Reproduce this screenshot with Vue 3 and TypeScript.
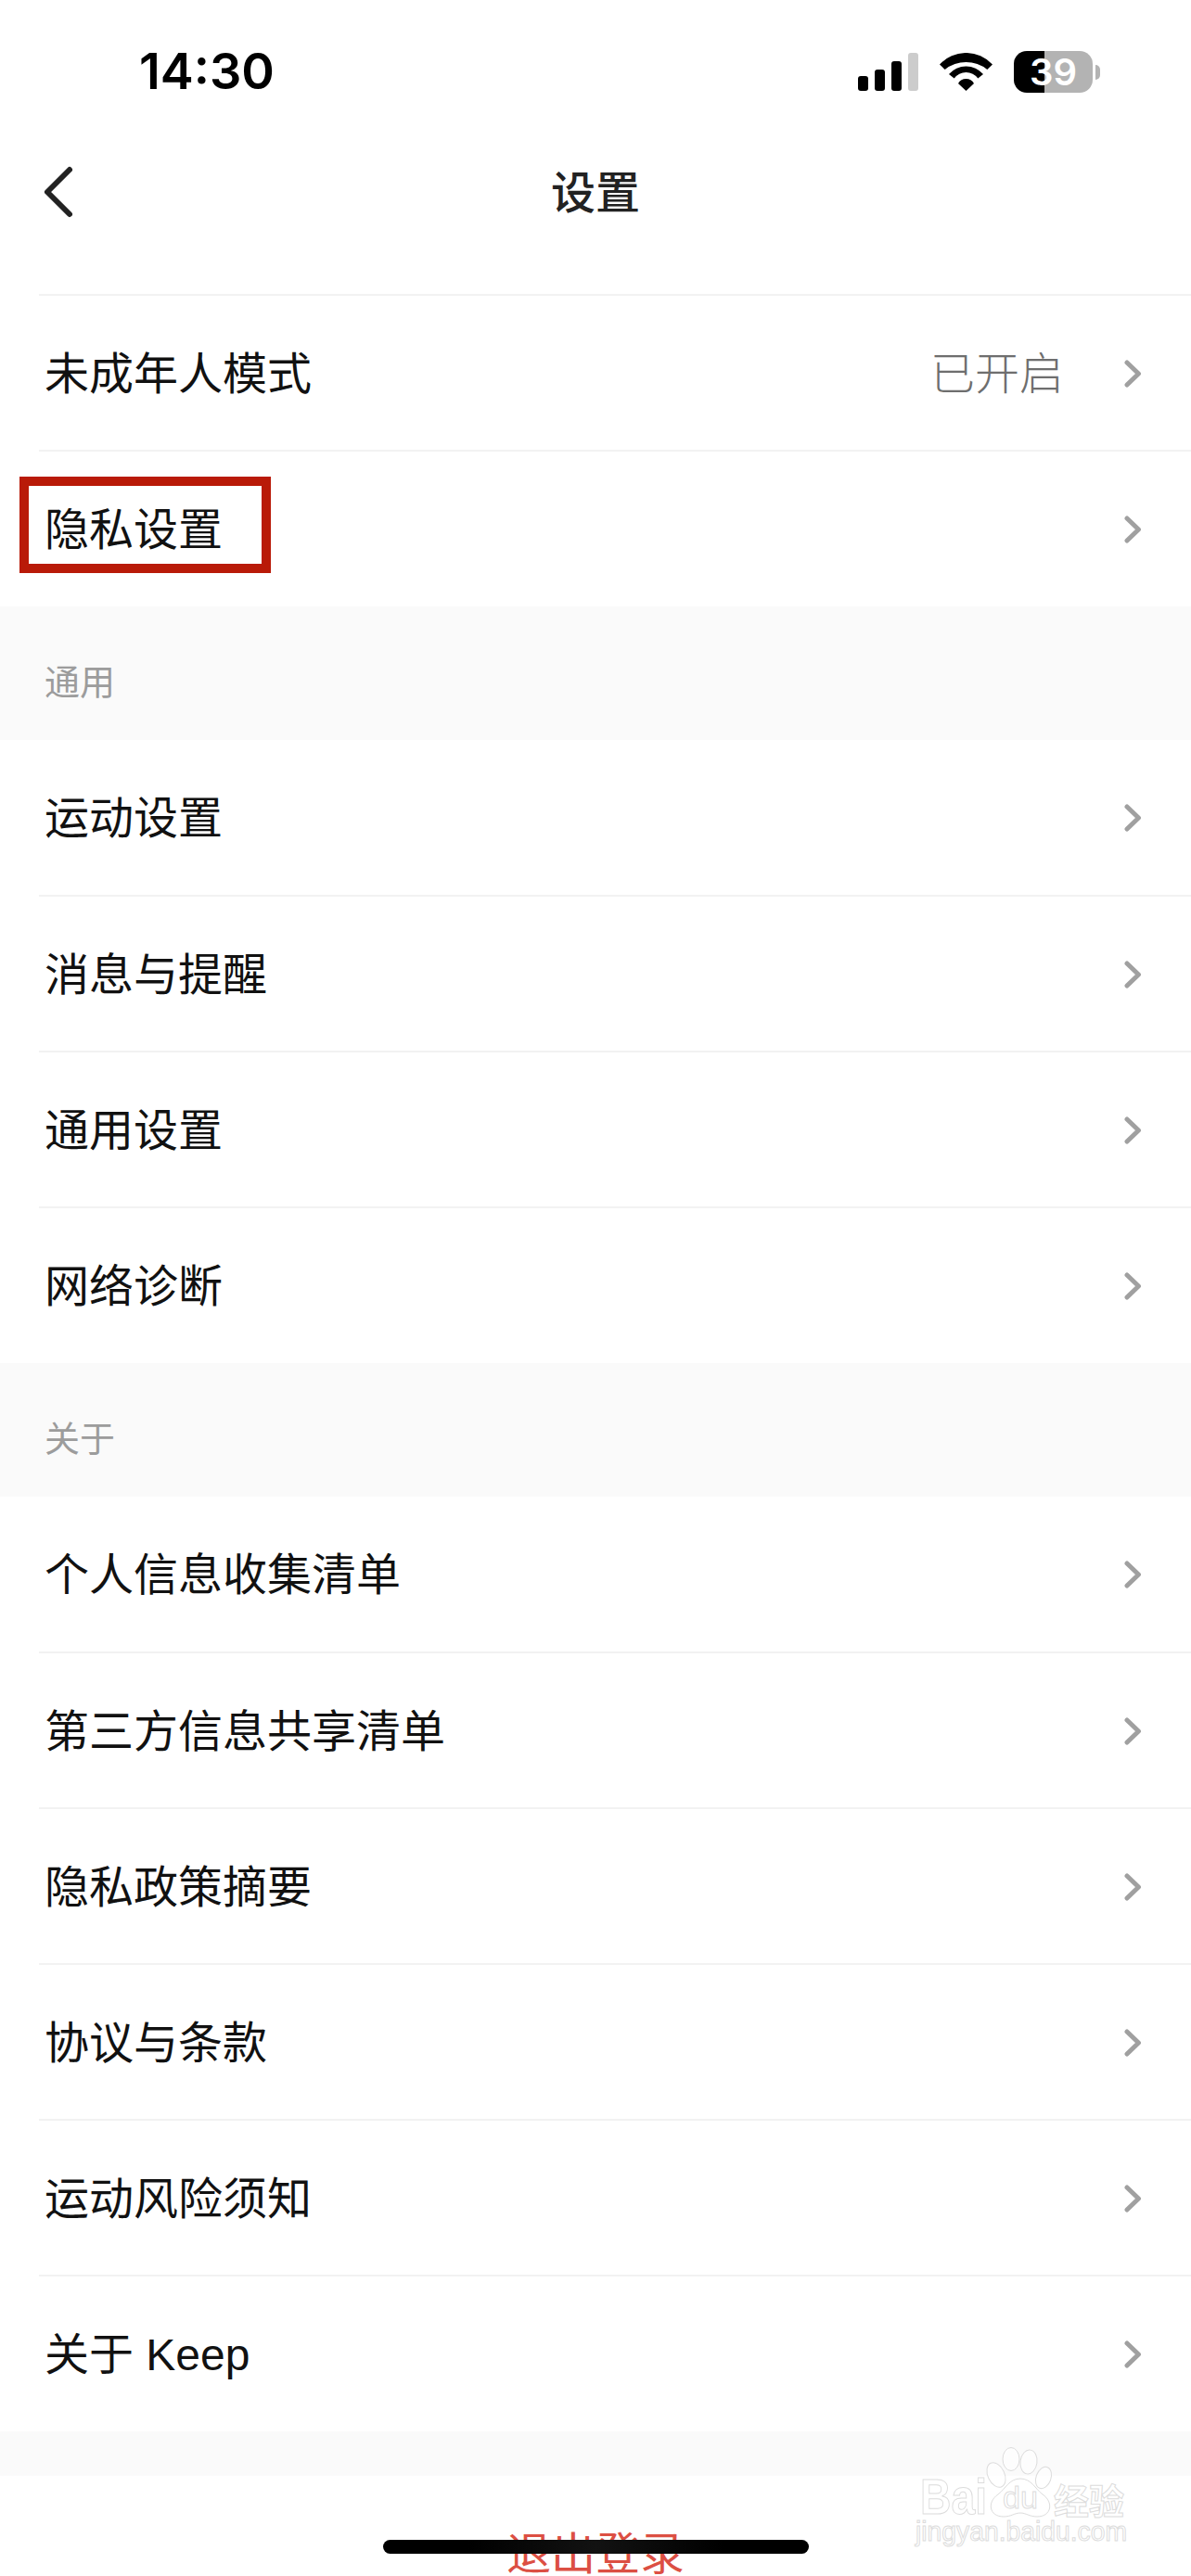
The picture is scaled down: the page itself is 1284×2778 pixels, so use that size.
<template>
  <div class="page">
    <!-- 状态栏 -->
    <div class="status-bar">
      <span class="time">14:30</span>
      <div class="status-icons">
        <div class="signal">
          <i class="b1"></i>
          <i class="b2"></i>
          <i class="b3"></i>
          <i class="b4"></i>
        </div>
        <svg class="wifi" width="57" height="41" viewBox="0 0 57 41">
          <path d="M0 12.6A38.5 38.5 0 0 1 57 12.6L51.3 18A36.5 36.5 0 0 0 5.7 18Z" />
          <path d="M10 23A24.4 24.4 0 0 1 47 23L41.3 27.5A15.9 15.9 0 0 0 15.7 27.5Z" />
          <path d="M20 33A9.7 9.7 0 0 1 37 33L28.5 41Z" />
        </svg>
        <div class="battery"><span>39</span></div>
        <div class="battery-nub"></div>
      </div>
    </div>

    <!-- 导航 -->
    <div class="nav">
      <svg class="back" width="34" height="58" viewBox="0 0 34 58">
        <path d="M29 5 5 29 29 53" />
      </svg>
      <span class="title">设置</span>
    </div>

    <div v-for="group in groups" :key="group.label" class="group">
      <div v-if="group.label" class="section-label"><span>{{ group.label }}</span></div>
      <div class="rows" :class="{ 'top-line': !group.label }">
        <div v-for="row in group.rows" :key="row.name" class="row">
          <span class="row-name">{{ row.name }}</span>
          <span v-if="row.value" class="row-value">{{ row.value }}</span>
          <svg class="chevron" width="22" height="34" viewBox="0 0 22 34">
            <path d="M3 5 15.500 17 3 29" />
          </svg>
          <div v-if="row.marked" class="mark"></div>
        </div>
      </div>
    </div>

    <div class="spacer"></div>
    <div class="logout"><span>退出登录</span></div>

    <!-- 水印 -->
    <svg class="watermark" width="260" height="130" viewBox="0 0 260 130">
      <g class="paw">
        <ellipse cx="104" cy="39" rx="9" ry="14" transform="rotate(-25 104 39)" />
        <ellipse cx="120" cy="22" rx="9" ry="12.500" />
        <ellipse cx="139" cy="25" rx="9" ry="13" transform="rotate(8 139 25)" />
        <ellipse cx="155" cy="42" rx="8" ry="12" transform="rotate(20 155 42)" />
        <path d="M130 43C142 43 146 54 154 60 166 68 164 84 148 84 140 84 136 80 130 80 124 80 120 84 112 84 96 84 94 68 106 60 114 54 118 43 130 43Z" />
      </g>
      <text class="wm-bai" x="22" y="81" textLength="72" lengthAdjust="spacingAndGlyphs">Bai</text>
      <text class="wm-du" x="111" y="75" textLength="38" lengthAdjust="spacingAndGlyphs">du</text>
      <text class="wm-cn" x="166" y="81">经验</text>
      <text class="wm-url" x="17" y="110" textLength="228" lengthAdjust="spacingAndGlyphs">jingyan.baidu.com</text>
    </svg>

    <div class="home-bar"></div>
  </div>
</template>

<script setup lang="ts">
interface Row {
  name: string;
  value?: string;
  marked?: boolean;
}

interface Group {
  label: string;
  rows: Row[];
}

const groups: Group[] = [
  {
    label: "",
    rows: [
      { name: "未成年人模式", value: "已开启" },
      { name: "隐私设置", marked: true },
    ],
  },
  {
    label: "通用",
    rows: [
      { name: "运动设置" },
      { name: "消息与提醒" },
      { name: "通用设置" },
      { name: "网络诊断" },
    ],
  },
  {
    label: "关于",
    rows: [
      { name: "个人信息收集清单" },
      { name: "第三方信息共享清单" },
      { name: "隐私政策摘要" },
      { name: "协议与条款" },
      { name: "运动风险须知" },
      { name: "关于 Keep" },
    ],
  },
];
</script>

<style>
html,
body {
  margin: 0;
  background: #fff;
}
</style>

<style scoped>
.page {
  position: relative;
  width: 1284px;
  height: 2778px;
  overflow: hidden;
  background: #fff;
  font-family: "Liberation Sans", "Noto Sans CJK SC", sans-serif;
  color: #111;
}

.status-bar {
  display: flex;
  align-items: center;
  justify-content: space-between;
  height: 155px;
  padding: 0 98px 0 150px;
  box-sizing: border-box;
}

.time {
  margin-top: -2px;
  font-family: Inter, "Liberation Sans", sans-serif;
  font-size: 54px;
  font-weight: 600;
  color: #000;
}

.status-icons {
  display: flex;
  align-items: center;
}

.signal {
  display: flex;
  align-items: flex-end;
  gap: 7px;
  height: 41px;
  margin-right: 23px;
}

.signal i {
  display: block;
  width: 11px;
  border-radius: 3px;
  background: #000;
}

.signal .b1 {
  height: 16px;
}

.signal .b2 {
  height: 23px;
}

.signal .b3 {
  height: 32px;
}

.signal .b4 {
  height: 41px;
  background: #ccc;
}

.wifi {
  margin-right: 23px;
}

.wifi path {
  fill: #000;
}

.battery {
  display: flex;
  align-items: center;
  justify-content: center;
  width: 85px;
  height: 45px;
  border-radius: 14px;
  background: linear-gradient(90deg, #000 33px, #b3b3b3 33px);
}

.battery span {
  font-family: Inter, "Liberation Sans", sans-serif;
  font-size: 40px;
  font-weight: 600;
  color: #fff;
}

.battery-nub {
  width: 5px;
  height: 16px;
  margin-left: 3px;
  border-radius: 0 8px 8px 0;
  background: #b3b3b3;
}

.nav {
  position: relative;
  display: flex;
  align-items: center;
  justify-content: center;
  height: 104px;
  margin-bottom: 59px;
}

.back {
  position: absolute;
  left: 46px;
  top: 23px;
}

.back path {
  fill: none;
  stroke: #222;
  stroke-width: 6;
  stroke-linecap: round;
  stroke-linejoin: round;
}

.title {
  padding-bottom: 6px;
  font-size: 48px;
  font-weight: 500;
  color: #222;
}

.section-label {
  display: flex;
  align-items: center;
  height: 144px;
  padding-left: 48px;
  font-size: 38px;
  background: #fafafa;
  color: #9c9c9c;
}

.section-label span {
  padding-top: 12px;
}

.rows {
  margin-left: 42px;
}

.rows.top-line {
  margin-top: -1px;
  border-top: 2px solid #f2f2f2;
}

.row {
  position: relative;
  display: flex;
  align-items: center;
  height: 168px;
  padding: 0 50px 0 6px;
  box-sizing: border-box;
}

.row + .row {
  height: 169px;
  margin-top: -1px;
  border-top: 2px solid #f2f2f2;
}

.rows.top-line .row:first-child {
  height: 167px;
}

.row-name {
  flex: 1;
  padding-bottom: 8px;
  font-size: 48px;
  color: #111;
}

.row-value {
  margin-right: 65px;
  padding-bottom: 8px;
  font-size: 48px;
  font-weight: 300;
  color: #6e6e6e;
}

.chevron path {
  fill: none;
  stroke: #a0a0a0;
  stroke-width: 5;
  stroke-linecap: round;
  stroke-linejoin: round;
}

.mark {
  position: absolute;
  left: -21px;
  top: 27px;
  width: 271px;
  height: 104px;
  box-sizing: border-box;
  border: 10px solid #b91a08;
}

.spacer {
  height: 48px;
  background: #fafafa;
}

.logout {
  display: flex;
  align-items: center;
  justify-content: center;
  height: 168px;
  font-size: 48px;
  color: #dc4f43;
}

.logout span {
  padding-bottom: 8px;
}

.watermark {
  position: absolute;
  left: 970px;
  top: 2630px;
}

.watermark text,
.paw ellipse,
.paw path {
  fill: rgba(255, 255, 255, 0.6);
  stroke: #dcdcdc;
  stroke-width: 1;
}

.wm-bai {
  font-size: 53px;
  font-weight: 700;
}

.wm-du {
  font-size: 34px;
}

.wm-cn {
  font-size: 38px;
  font-weight: 700;
}

.wm-url {
  font-size: 29px;
}

.home-bar {
  position: absolute;
  left: 413px;
  top: 2739px;
  width: 459px;
  height: 15px;
  border-radius: 8px;
  background: linear-gradient(90deg, #000 20%, #121212 50%, #000 80%);
}
</style>
